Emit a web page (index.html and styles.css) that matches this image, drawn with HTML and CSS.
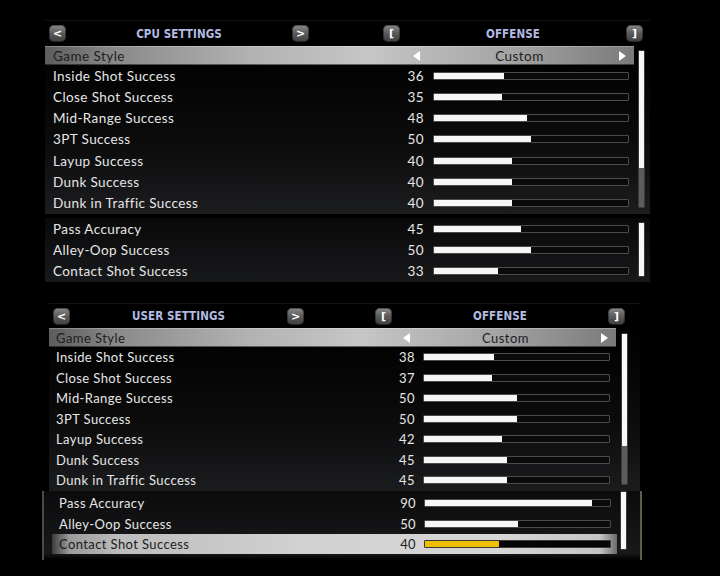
FILE: index.html
```html
<!DOCTYPE html>
<html>
<head>
<meta charset="utf-8">
<link rel="stylesheet" href="styles.css">
</head>
<body>
<section class="panel panel-cpu">
  <div class="hdr">
    <span class="btn">&lt;</span><span class="title">CPU SETTINGS</span><span class="btn">&gt;</span><span></span>
    <span class="btn">[</span><span class="title">OFFENSE</span><span class="btn">]</span>
  </div>
  <div class="block b1">
    <div class="list">
      <div class="style"><span class="name">Game Style</span><span class="val"><i class="tri-l"></i><span class="txt">Custom</span><i class="tri-r"></i></span></div>
      <div class="row"><span class="lbl">Inside Shot Success</span><span class="num">36</span><span class="bar"><span class="fill" style="width:36%"></span></span></div>
      <div class="row"><span class="lbl">Close Shot Success</span><span class="num">35</span><span class="bar"><span class="fill" style="width:35%"></span></span></div>
      <div class="row"><span class="lbl">Mid-Range Success</span><span class="num">48</span><span class="bar"><span class="fill" style="width:48%"></span></span></div>
      <div class="row"><span class="lbl">3PT Success</span><span class="num">50</span><span class="bar"><span class="fill" style="width:50%"></span></span></div>
      <div class="row"><span class="lbl">Layup Success</span><span class="num">40</span><span class="bar"><span class="fill" style="width:40%"></span></span></div>
      <div class="row"><span class="lbl">Dunk Success</span><span class="num">40</span><span class="bar"><span class="fill" style="width:40%"></span></span></div>
      <div class="row"><span class="lbl">Dunk in Traffic Success</span><span class="num">40</span><span class="bar"><span class="fill" style="width:40%"></span></span></div>
    </div>
    <div class="scroll s1"><span class="thumb"></span><span class="rest"></span></div>
  </div>
  <div class="block b2">
    <div class="list">
      <div class="row"><span class="lbl">Pass Accuracy</span><span class="num">45</span><span class="bar"><span class="fill" style="width:45%"></span></span></div>
      <div class="row"><span class="lbl">Alley-Oop Success</span><span class="num">50</span><span class="bar"><span class="fill" style="width:50%"></span></span></div>
      <div class="row"><span class="lbl">Contact Shot Success</span><span class="num">33</span><span class="bar"><span class="fill" style="width:33%"></span></span></div>
    </div>
    <div class="scroll s2"><span class="thumb"></span></div>
  </div>
</section>

<section class="panel panel-user">
  <div class="hdr">
    <span class="btn">&lt;</span><span class="title">USER SETTINGS</span><span class="btn">&gt;</span><span></span>
    <span class="btn">[</span><span class="title">OFFENSE</span><span class="btn">]</span>
  </div>
  <div class="block b1">
    <div class="list">
      <div class="style"><span class="name">Game Style</span><span class="val"><i class="tri-l"></i><span class="txt">Custom</span><i class="tri-r"></i></span></div>
      <div class="row"><span class="lbl">Inside Shot Success</span><span class="num">38</span><span class="bar"><span class="fill" style="width:38%"></span></span></div>
      <div class="row"><span class="lbl">Close Shot Success</span><span class="num">37</span><span class="bar"><span class="fill" style="width:37%"></span></span></div>
      <div class="row"><span class="lbl">Mid-Range Success</span><span class="num">50</span><span class="bar"><span class="fill" style="width:50%"></span></span></div>
      <div class="row"><span class="lbl">3PT Success</span><span class="num">50</span><span class="bar"><span class="fill" style="width:50%"></span></span></div>
      <div class="row"><span class="lbl">Layup Success</span><span class="num">42</span><span class="bar"><span class="fill" style="width:42%"></span></span></div>
      <div class="row"><span class="lbl">Dunk Success</span><span class="num">45</span><span class="bar"><span class="fill" style="width:45%"></span></span></div>
      <div class="row"><span class="lbl">Dunk in Traffic Success</span><span class="num">45</span><span class="bar"><span class="fill" style="width:45%"></span></span></div>
    </div>
    <div class="scroll s1"><span class="thumb"></span><span class="rest"></span></div>
  </div>
  <div class="block b2">
    <div class="list">
      <div class="row"><span class="lbl">Pass Accuracy</span><span class="num">90</span><span class="bar"><span class="fill" style="width:90%"></span></span></div>
      <div class="row"><span class="lbl">Alley-Oop Success</span><span class="num">50</span><span class="bar"><span class="fill" style="width:50%"></span></span></div>
      <div class="row sel"><span class="lbl">Contact Shot Success</span><span class="num">40</span><span class="bar"><span class="fill" style="width:40%"></span></span></div>
    </div>
    <div class="scroll s2"><span class="thumb"></span></div>
  </div>
</section>
</body>
</html>
```
FILE: styles.css
```css
* { box-sizing: border-box; }
html, body { margin: 0; padding: 0; background: #000; }
body {
  width: 720px;
  height: 576px;
  overflow: hidden;
  font-family: Lato, "Open Sans", sans-serif;
  color: #e8e8e8;
}

.panel { display: flex; flex-direction: column; }
.panel-cpu { margin: 20px 0 0 45px; width: 605px; }
.panel-user { margin: 21px 0 0 49px; width: 591px; }

/* header */
.hdr {
  display: grid;
  align-items: center;
  padding-left: 4px;
  border-top: 1px solid #141414;
}
.panel-cpu .hdr { grid-template-columns: 17px 226px 17px 74px 17px 226px 17px; height: 26px; }
.panel-user .hdr { grid-template-columns: 17px 217px 17px 71px 17px 216px 17px; height: 25px; }

.btn {
  height: 17px;
  border-radius: 5px;
  background: linear-gradient(#8a8a8a, #5a5a5a 50%, #3e3e3e);
  box-shadow: inset 0 0 0 1px rgba(0,0,0,0.4), 0 0 1px #000;
  color: #fff;
  font-family: "DejaVu Sans", sans-serif;
  font-weight: bold;
  font-size: 11px;
  display: flex;
  align-items: center;
  justify-content: center;
}
.title {
  text-align: center;
  color: #b3bce2;
  font-family: "DejaVu Sans Condensed", "DejaVu Sans", sans-serif;
  font-stretch: condensed;
  font-weight: bold;
  font-size: 11.5px;
  letter-spacing: 0.1px;
}

/* blocks */
.block { display: flex; }
.panel-cpu .b1 { background: linear-gradient(#000 0%, #050505 25%, #0c0c0d 60%, #1c1d1f 100%); }
.panel-cpu .b2 { margin-top: 4.6px; background: linear-gradient(#09090a, #18191b); }
.panel-user .b1 { background: linear-gradient(#000 0%, #050505 25%, #0c0c0d 60%, #1b1c1e 100%); }
.panel-user .b2 {
  width: 600px;
  margin-left: -7px;
  padding: 2.25px 13px 6px 8px;
  border-left: 2px solid #4a4a4a;
  border-right: 2px solid #5e5b4c;
  background: linear-gradient(#0b0b0c, #18191b 90%, #000 100%);
}

.panel-cpu .list { width: 589px; }
.panel-user .b1 .list { width: 567px; }
.panel-user .b2 .list { width: 566px; }

/* game style bar */
.style {
  display: flex;
  align-items: center;
  height: 19px;
  color: #1e1e1e;
  background: linear-gradient(90deg, #5c5c5c 0%, #8a8a8a 12%, #b2b2b2 35%, #c6c6c6 55%, #a6a6a6 78%, #7a7a7a 100%);
  box-shadow: inset 0 1px 0 rgba(255,255,255,0.25), inset 0 -1px 0 rgba(0,0,0,0.5);
  letter-spacing: 0.45px;
}
.panel-cpu .style { font-size: 13.5px; }
.panel-user .style { font-size: 13px; }
.style .name { flex: 1; padding-left: 8px; }
.panel-user .style .name { padding-left: 7px; }
.style .val { display: flex; align-items: center; }
.panel-cpu .style .val { width: 226px; padding: 0 8px 0 5px; }
.panel-user .style .val { width: 217px; padding: 0 8px 0 4px; }
.style .txt { flex: 1; text-align: center; }
.tri-l, .tri-r { width: 0; height: 0; border-top: 5px solid transparent; border-bottom: 5px solid transparent; }
.tri-l { border-right: 7px solid #fff; }
.tri-r { border-left: 7px solid #fff; }

/* rows */
.row { display: flex; align-items: center; color: #e6e6e6; letter-spacing: 0.4px; }
.panel-cpu .row { height: 21.25px; font-size: 13.5px; padding: 0 5px 0 8px; }
.panel-user .row { height: 20.5px; font-size: 13px; padding: 0 6px 0 7px; }
.row .lbl { flex: 1; white-space: nowrap; }
.row .num { width: 30px; text-align: right; }
.bar {
  height: 8px;
  border: 1.5px solid #4c4c4c;
  border-radius: 1px;
  background: #0a0a0a;
  display: flex;
}
.panel-cpu .bar { width: 196px; margin-left: 9px; }
.panel-user .bar { width: 187px; margin-left: 8px; }
.fill { height: 100%; background: #f6f6f6; }

.row.sel {
  color: #1c1c1c;
  background: linear-gradient(90deg, #3c3c3c 0%, #9a9a9a 3%, #bdbdbd 12%, #d2d2d2 45%, #d6d6d6 80%, #c4c4c4 97%, #6a6a6a 100%);
}
.row.sel .bar { background: #050505; border-color: #3a3a3a; }
.row.sel .fill { background: #f0c000; }

/* scrollbars */
.scroll {
  display: flex;
  flex-direction: column;
  border: 1px solid #3a3a3a;
  border-radius: 1px;
  background: #222;
}
.thumb { background: #f8f8f8; flex: 118; }
.rest { background: #5c5c5c; flex: 40; }
.panel-cpu .scroll { width: 7px; margin-left: 4px; }
.panel-cpu .s1 { margin-top: 4px; margin-bottom: 5.75px; }
.panel-cpu .s2 { margin-top: 3.6px; margin-bottom: 5.2px; }
.panel-user .scroll { width: 7px; }
.panel-user .s1 { margin-left: 5px; margin-top: 5px; margin-bottom: 5.5px; }
.panel-user .s1 .thumb { flex: 113; }
.panel-user .s1 .rest { flex: 38; }
.panel-user .s2 { margin-left: 3px; margin-top: -2px; margin-bottom: 4px; }
```
